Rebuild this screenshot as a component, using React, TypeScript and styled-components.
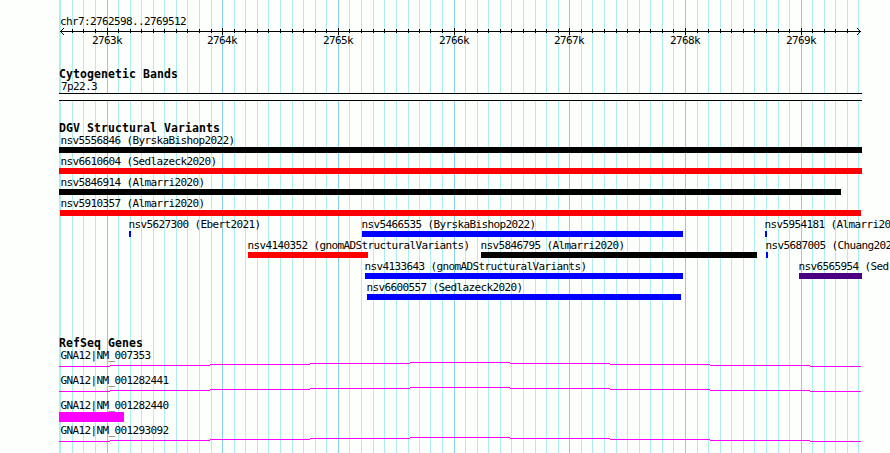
import React from 'react';
import styled, { createGlobalStyle } from 'styled-components';

const GlobalStyle = createGlobalStyle`
  body {
    margin: 0;
    background: #fdfffc;
  }
`;

const LEFT = 59;
const WIDTH = 803;

const gridLines = [
  72, 83, 95, 107, 118, 130, 141, 153, 164, 176, 187, 199, 211, 222, 234, 245, 257, 268, 280, 292,
  303, 315, 326, 338, 349, 361, 373, 384, 396, 408, 419, 430, 442, 454, 465, 477, 488, 500, 511,
  523, 535, 546, 558, 569, 581, 592, 604, 616, 627, 639, 650, 662, 673, 685, 697, 708, 720, 731,
  743, 754, 766, 778, 789, 801, 812, 824, 835, 847, 858,
];
const majors = [107, 222, 338, 454, 569, 685, 801];

type Feature = { name: string; labelX: number; start: number; end: number; color: string };

const BLACK = '#000000';
const RED = '#ff0000';
const BLUE = '#0000ff';
const INDIGO = '#4b0082';

const lanes: Feature[][] = [
  [{ name: 'nsv5556846 (ByrskaBishop2022)', labelX: 60, start: 59, end: 862, color: BLACK }],
  [{ name: 'nsv6610604 (Sedlazeck2020)', labelX: 60, start: 59, end: 862, color: RED }],
  [{ name: 'nsv5846914 (Almarri2020)', labelX: 60, start: 59, end: 841, color: BLACK }],
  [{ name: 'nsv5910357 (Almarri2020)', labelX: 60, start: 60, end: 861, color: RED }],
  [
    { name: 'nsv5627300 (Ebert2021)', labelX: 128, start: 129, end: 131, color: BLUE },
    { name: 'nsv5466535 (ByrskaBishop2022)', labelX: 361, start: 362, end: 683, color: BLUE },
    { name: 'nsv5954181 (Almarri2020)', labelX: 764, start: 765, end: 767, color: BLUE },
  ],
  [
    { name: 'nsv4140352 (gnomADStructuralVariants)', labelX: 247, start: 248, end: 368, color: RED },
    { name: 'nsv5846795 (Almarri2020)', labelX: 480, start: 481, end: 757, color: BLACK },
    { name: 'nsv5687005 (Chuang202', labelX: 765, start: 766, end: 768, color: BLUE },
  ],
  [
    { name: 'nsv4133643 (gnomADStructuralVariants)', labelX: 364, start: 365, end: 683, color: BLUE },
    { name: 'nsv6565954 (Sed', labelX: 798, start: 799, end: 862, color: INDIGO },
  ],
  [{ name: 'nsv6600557 (Sedlazeck2020)', labelX: 366, start: 367, end: 681, color: BLUE }],
];

const genes = [
  { name: 'GNA12|NM_007353', exon: false },
  { name: 'GNA12|NM_001282441', exon: false },
  { name: 'GNA12|NM_001282440', exon: true },
  { name: 'GNA12|NM_001293092', exon: false },
];

const intronSteps = [
  [59, 110, 4], [110, 210, 3], [210, 310, 2], [310, 410, 1], [410, 510, 0],
  [510, 610, 1], [610, 710, 2], [710, 810, 3], [810, 861, 4],
];

const Browser = styled.main`
  position: relative;
  isolation: isolate;
  box-sizing: border-box;
  width: 890px;
  height: 453px;
  padding-top: 15px;
  overflow: hidden;
  background: #fdfffc;
  color: #000;
`;

const GridBackdrop = styled.svg`
  position: absolute;
  inset: 0;
  z-index: -1;
`;

const Label = styled.div<{ $x: number }>`
  margin-left: ${(p) => p.$x}px;
  height: 13px;
  font: 11px/13px 'DejaVu Sans Mono', monospace;
  letter-spacing: -0.6225px;
  white-space: pre;
`;

const TrackTitle = styled.h2`
  margin: 0 0 0 ${LEFT}px;
  height: 12px;
  font: bold 11.5px/12px 'DejaVu Sans Mono', monospace;
  letter-spacing: 0.077px;
  white-space: pre;
`;

const RulerAxis = styled.svg`
  display: block;
  height: 7px;
`;

const RulerLabels = styled.div`
  display: grid;
  height: 13px;
  margin-top: -1px;

  > * {
    grid-area: 1 / 1;
  }
`;

const Track = styled.section<{ $gap: number }>`
  margin-top: ${(p) => p.$gap}px;
`;

const Band = styled.div`
  box-sizing: border-box;
  width: ${WIDTH}px;
  height: 8px;
  margin-left: ${LEFT}px;
  border: solid #000;
  border-width: 1px 0;
  background: #fdfffc;
`;

const Lane = styled.div`
  display: grid;
  grid-template-columns: 890px;
  height: 21px;
`;

const FeatureItem = styled.div`
  grid-area: 1 / 1;
`;

const FeatureBar = styled.div<{ $start: number; $end: number; $color: string }>`
  width: ${(p) => p.$end - p.$start}px;
  height: 6px;
  margin-left: ${(p) => p.$start}px;
  background: ${(p) => p.$color};
`;

const GeneRow = styled.div`
  height: 25px;
`;

const Exon = styled.div`
  width: 65px;
  height: 10px;
  margin-left: ${LEFT}px;
  background: #ff00ff;
`;

const Intron = styled.svg`
  display: block;
`;

function Grid() {
  return (
    <GridBackdrop width="890" height="453" shapeRendering="crispEdges">
      <rect x={59} y={0} width={2} height={453} fill="#afeeee" />
      {gridLines.map((x) => (
        <rect key={x} x={x} y={0} width={1} height={453} fill={majors.includes(x) ? '#87ceeb' : '#afeeee'} />
      ))}
    </GridBackdrop>
  );
}

function Ruler() {
  return (
    <>
      <RulerAxis width="890" height="7" shapeRendering="crispEdges">
        <rect x={60} y={3} width={801} height={1} />
        {gridLines.map((x) =>
          majors.includes(x) ? (
            <rect key={x} x={x} y={0} width={1} height={7} />
          ) : x < 858 ? (
            <rect key={x} x={x} y={1} width={1} height={4} />
          ) : null,
        )}
        {[1, 2, 3].map((d) => (
          <React.Fragment key={d}>
            <rect x={60 + d} y={3 - d} width={1} height={1} />
            <rect x={60 + d} y={3 + d} width={1} height={1} />
            <rect x={860 - d} y={3 - d} width={1} height={1} />
            <rect x={860 - d} y={3 + d} width={1} height={1} />
          </React.Fragment>
        ))}
      </RulerAxis>
      <RulerLabels>
        {majors.map((x, i) => (
          <Label key={x} $x={x - 15}>{`${2763 + i}k`}</Label>
        ))}
      </RulerLabels>
    </>
  );
}

export default function App() {
  return (
    <Browser>
      <GlobalStyle />
      <Grid />
      <Label $x={60}>chr7:2762598..2769512</Label>
      <Ruler />
      <Track $gap={21}>
        <TrackTitle>Cytogenetic Bands</TrackTitle>
        <Label $x={61}>7p22.3</Label>
        <Band />
      </Track>
      <Track $gap={21}>
        <TrackTitle>DGV Structural Variants</TrackTitle>
        {lanes.map((lane, i) => (
          <Lane key={i}>
            {lane.map((f) => (
              <FeatureItem key={f.name}>
                <Label $x={f.labelX + 0.5}>{f.name}</Label>
                <FeatureBar $start={f.start} $end={f.end} $color={f.color} />
              </FeatureItem>
            ))}
          </Lane>
        ))}
      </Track>
      <Track $gap={35}>
        <TrackTitle>RefSeq Genes</TrackTitle>
        {genes.map((gene) => (
          <GeneRow key={gene.name}>
            <Label $x={60.5}>{gene.name}</Label>
            {gene.exon ? (
              <Exon />
            ) : (
              <Intron width="890" height="10" shapeRendering="crispEdges">
                {intronSteps.map(([start, end, y]) => (
                  <rect key={start} x={start} y={y} width={end - start} height={1} fill="#ff00ff" />
                ))}
              </Intron>
            )}
          </GeneRow>
        ))}
      </Track>
    </Browser>
  );
}
